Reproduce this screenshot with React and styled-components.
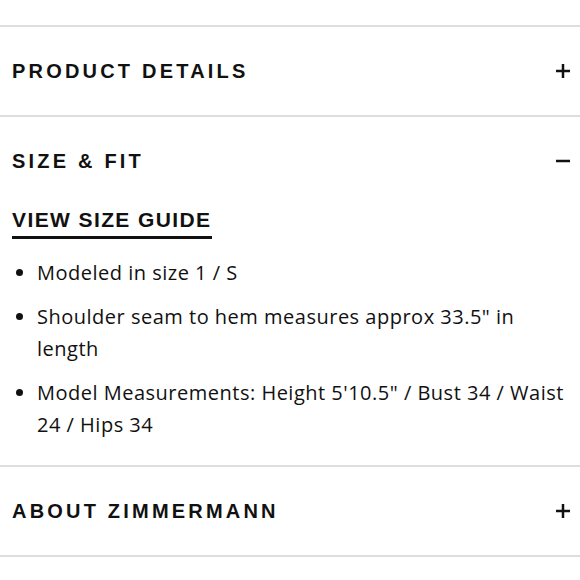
import styled, { createGlobalStyle } from 'styled-components';

const GlobalStyle = createGlobalStyle`
    body {
        margin: 0;
        background: #fff;
        color: #111;
    }
`

const sections = [
    { title: "PRODUCT DETAILS", open: false },
    { title: "SIZE & FIT", open: true },
    { title: "ABOUT ZIMMERMANN", open: false },
];

const fitItems = [
    "Modeled in size 1 / S",
    "Shoulder seam to hem measures approx 33.5\" in length",
    "Model Measurements: Height 5'10.5\" / Bust 34 / Waist 24 / Hips 34",
];

function Toggle ({ open }) {
    return (
        <svg width="14" height="14" viewBox="0 0 14 14">
            <rect x="0" y="5.75" width="14" height="2.5" fill="#111" />
            {!open && <rect x="5.75" y="0" width="2.5" height="14" fill="#111" />}
        </svg>
    )
}

export default function App () {
    return (
        <Page>
            <GlobalStyle />
            {sections.map(({ title, open }) =>
                <Section key={title}>
                    <Header>
                        <Title>{title}</Title>
                        <Toggle open={open} />
                    </Header>
                    {open &&
                        <Content>
                            <GuideLink href="#">VIEW SIZE GUIDE</GuideLink>
                            <List>
                                {fitItems.map((text, i) =>
                                    <Item key={i}>{text}</Item>
                                )}
                            </List>
                        </Content>
                    }
                </Section>
            )}
        </Page>
    )
}

const Page = styled.div`
    width: 580px;
    height: 580px;
    padding-top: 25px;
    box-sizing: border-box;
    overflow: hidden;
`
const Section = styled.section`
    border-top: 2px solid #dedede;
    &:last-child {
        border-bottom: 2px solid #dedede;
    }
`
const Header = styled.div`
    display: flex;
    align-items: center;
    justify-content: space-between;
    height: 88px;
    padding: 0 10px 0 12px;
`
const Title = styled.h2`
    margin: 0;
    font-family: "Liberation Sans", Arial, sans-serif;
    font-weight: 700;
    font-size: 20px;
    letter-spacing: 3.2px;
    color: #111;
`
const Content = styled.div`
    padding: 3px 12px 24px;
`
const GuideLink = styled.a`
    display: inline-block;
    font-family: "Liberation Sans", Arial, sans-serif;
    font-weight: 700;
    font-size: 21px;
    letter-spacing: 1.4px;
    color: #111;
    text-decoration: none;
    border-bottom: 3px solid #111;
    padding-bottom: 4px;
`
const List = styled.ul`
    margin: 18px 0 0;
    padding: 0 0 0 25px;
    display: flex;
    flex-direction: column;
    gap: 12px;
`
const Item = styled.li`
    font-family: "Open Sans", "Noto Sans", sans-serif;
    font-size: 20px;
    line-height: 32px;
    letter-spacing: 0.5px;
    color: #111;
    &::marker {
        font-size: 20px;
    }
`
